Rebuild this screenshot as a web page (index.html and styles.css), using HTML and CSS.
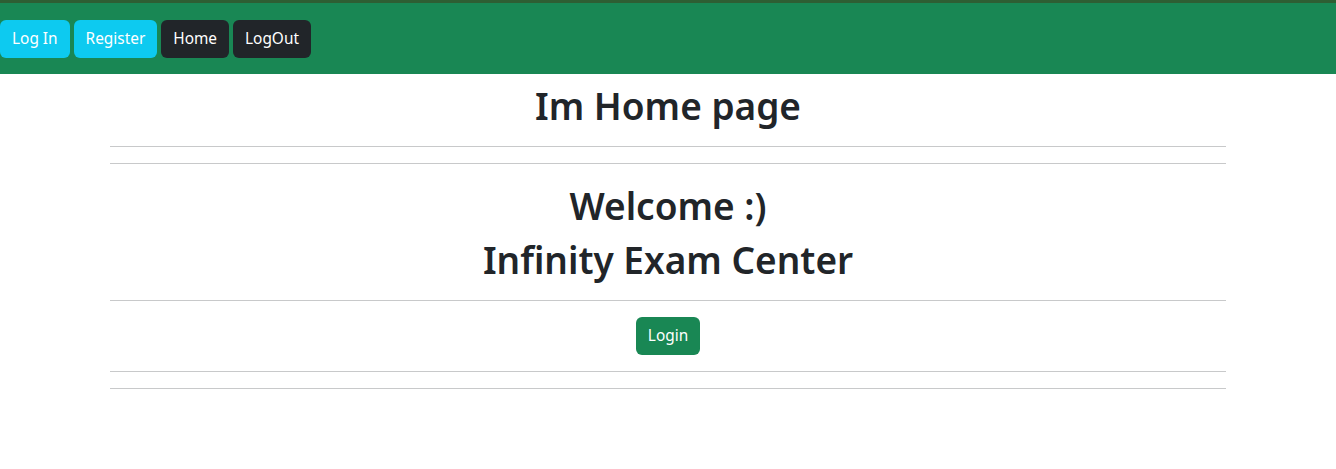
FILE: index.html
```html
<!DOCTYPE html>
<html>
<head>
<meta charset="utf-8">
<link rel="stylesheet" href="styles.css">
</head>
<body>
<nav class="topbar">
  <a class="btn btn-info" href="#">Log In</a>
  <a class="btn btn-info" href="#">Register</a>
  <a class="btn btn-dark" href="#">Home</a>
  <a class="btn btn-dark" href="#">LogOut</a>
</nav>
<main class="container">
  <h1 class="title">Im Home page</h1>
  <hr class="rule">
  <hr class="rule">
  <section class="welcome">
    <h1 class="heading">Welcome :)</h1>
    <h1 class="heading">Infinity Exam Center</h1>
  </section>
  <hr class="rule">
  <div class="actions">
    <a class="btn btn-success" href="#">Login</a>
  </div>
  <hr class="rule">
  <hr class="rule">
</main>
</body>
</html>
```

FILE: styles.css
```css
* { box-sizing: border-box; }
body {
  margin: 0;
  font-family: "Noto Sans", "Open Sans", sans-serif;
  color: #212529;
  background: #fff;
}
.topbar {
  background: #198754;
  border-top: 3px solid #2e5e33;
  height: 74px;
  padding-top: 17px;
  display: flex;
  gap: 4px;
}
.btn {
  display: inline-block;
  font-size: 15.4px;
  line-height: 24px;
  padding: 7px 12px;
  border-radius: 6px;
  color: #fff;
  text-decoration: none;
  height: 38px;
}
.btn-info { background: #0dcaf0; }
.btn-dark { background: #212529; }
.btn-success { background: #198754; }
.container {
  width: 1116px;
  margin: 0 auto;
  text-align: center;
}
.title, .heading {
  font-size: 37px;
  font-weight: 600;
  line-height: 48px;
  margin: 0;
}
.title { padding-top: 8px; }
.rule {
  border: 0;
  border-top: 1px solid #c8c9ca;
  margin: 16px 0;
  height: 0;
}
.welcome { padding-top: 2px; display: flex; flex-direction: column; gap: 6px; }
```
